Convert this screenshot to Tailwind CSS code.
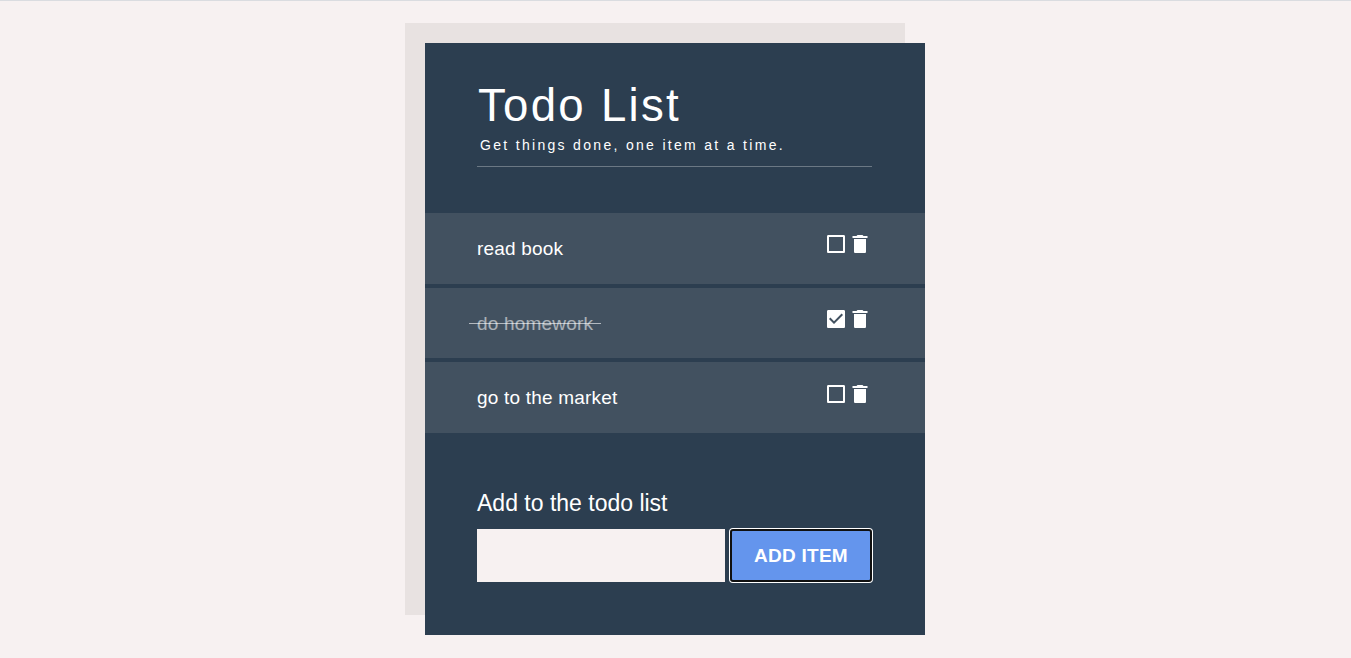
<!DOCTYPE html>
<html lang="en">
<head>
<meta charset="utf-8">
<title>Todo List</title>
<script src="https://cdn.jsdelivr.net/npm/@tailwindcss/browser@4"></script>
</head>
<body class="h-[658px] overflow-hidden border-t border-[#dadce0] bg-[#f7f1f1] pt-[42px] font-['Liberation_Sans',Arial,sans-serif] text-white">
<main class="ml-[425px] flex h-[592px] w-[500px] flex-col bg-[#2c3e50] shadow-[-20px_-20px_0_0_#e8e2e1]">
  <header class="mx-[52px] h-[124px] w-[395px] border-b border-white/30 pt-9">
    <h1 class="h-[53px] whitespace-nowrap pl-px text-[45.6px] leading-[53px] tracking-[0.05em]">Todo List</h1>
    <p class="mt-[4px] whitespace-nowrap pl-[3px] text-[14px] leading-[18px] tracking-[2.31px]">Get things done, one item at a time.</p>
  </header>
  <ul class="mt-[46px] flex flex-col gap-1 text-[19px] tracking-[0.2px]">
    <li class="flex h-[70.6px] justify-between bg-[#425160] pl-[52px] pr-[53px]">
      <span class="pt-[25px] leading-[22px]">read book</span>
      <span class="flex pt-[19px]">
        <svg class="size-6" viewBox="0 0 24 24" fill="currentColor"><path d="M19 5v14H5V5h14m0-2H4.500c-1 0-1.500.5-1.500 1.500v15c0 1 .5 1.500 1.500 1.500h15c1 0 1.500-.5 1.500-1.500v-15c0-1-.5-1.500-1.500-1.500z"/></svg>
        <svg class="size-6" viewBox="0 0 24 24" fill="currentColor"><path d="M6 19.500c0 1 .5 1.500 1.500 1.500h9c1 0 1.500-.5 1.500-1.500V7H6v12.500zM19.500 4H15.500l-1-1h-5l-1 1H4.500v2h15V4z"/></svg>
      </span>
    </li>
    <li class="flex h-[70.6px] justify-between bg-[#425160] pl-[52px] pr-[53px]">
      <span class="relative pt-[25px] leading-[22px] text-white/55">do homework<i class="absolute -left-2 -right-2 top-[35px] h-px bg-white/60"></i></span>
      <span class="flex pt-[19px]">
        <svg class="size-6" viewBox="0 0 24 24" fill="currentColor"><path d="M19.500 3h-15C3.500 3 3 3.500 3 4.500v15c0 1 .5 1.500 1.500 1.500h15c1 0 1.500-.5 1.500-1.500v-15c0-1-.5-1.500-1.500-1.500zM10 17l-5-5 1.410-1.410L10 14.170l7.590-7.590L19 8l-9 9z"/></svg>
        <svg class="size-6" viewBox="0 0 24 24" fill="currentColor"><path d="M6 19.500c0 1 .5 1.500 1.500 1.500h9c1 0 1.500-.5 1.500-1.500V7H6v12.500zM19.500 4H15.500l-1-1h-5l-1 1H4.500v2h15V4z"/></svg>
      </span>
    </li>
    <li class="flex h-[70.6px] justify-between bg-[#425160] pl-[52px] pr-[53px]">
      <span class="pt-[25px] leading-[22px]">go to the market</span>
      <span class="flex pt-[19.8px]">
        <svg class="size-6" viewBox="0 0 24 24" fill="currentColor"><path d="M19 5v14H5V5h14m0-2H4.500c-1 0-1.500.5-1.500 1.500v15c0 1 .5 1.500 1.500 1.500h15c1 0 1.500-.5 1.500-1.500v-15c0-1-.5-1.500-1.500-1.500z"/></svg>
        <svg class="size-6" viewBox="0 0 24 24" fill="currentColor"><path d="M6 19.500c0 1 .5 1.500 1.500 1.500h9c1 0 1.500-.5 1.500-1.500V7H6v12.500zM19.500 4H15.500l-1-1h-5l-1 1H4.500v2h15V4z"/></svg>
      </span>
    </li>
  </ul>
  <form class="px-[52px] pt-[56px]">
    <label for="item" class="block h-[40px] text-[23px] leading-[28px]">Add to the todo list</label>
    <div class="flex gap-[5px]">
      <input id="item" type="text" class="h-[53px] w-[248px] bg-[#f7f1f1]">
      <button type="button" class="h-[53px] w-[142px] rounded-[3px] border-2 border-[#101010] bg-[#6495ed] pt-px text-[19px] font-bold leading-[22px] tracking-[0.25px] ring-1 ring-white">ADD ITEM</button>
    </div>
  </form>
</main>
</body>
</html>
